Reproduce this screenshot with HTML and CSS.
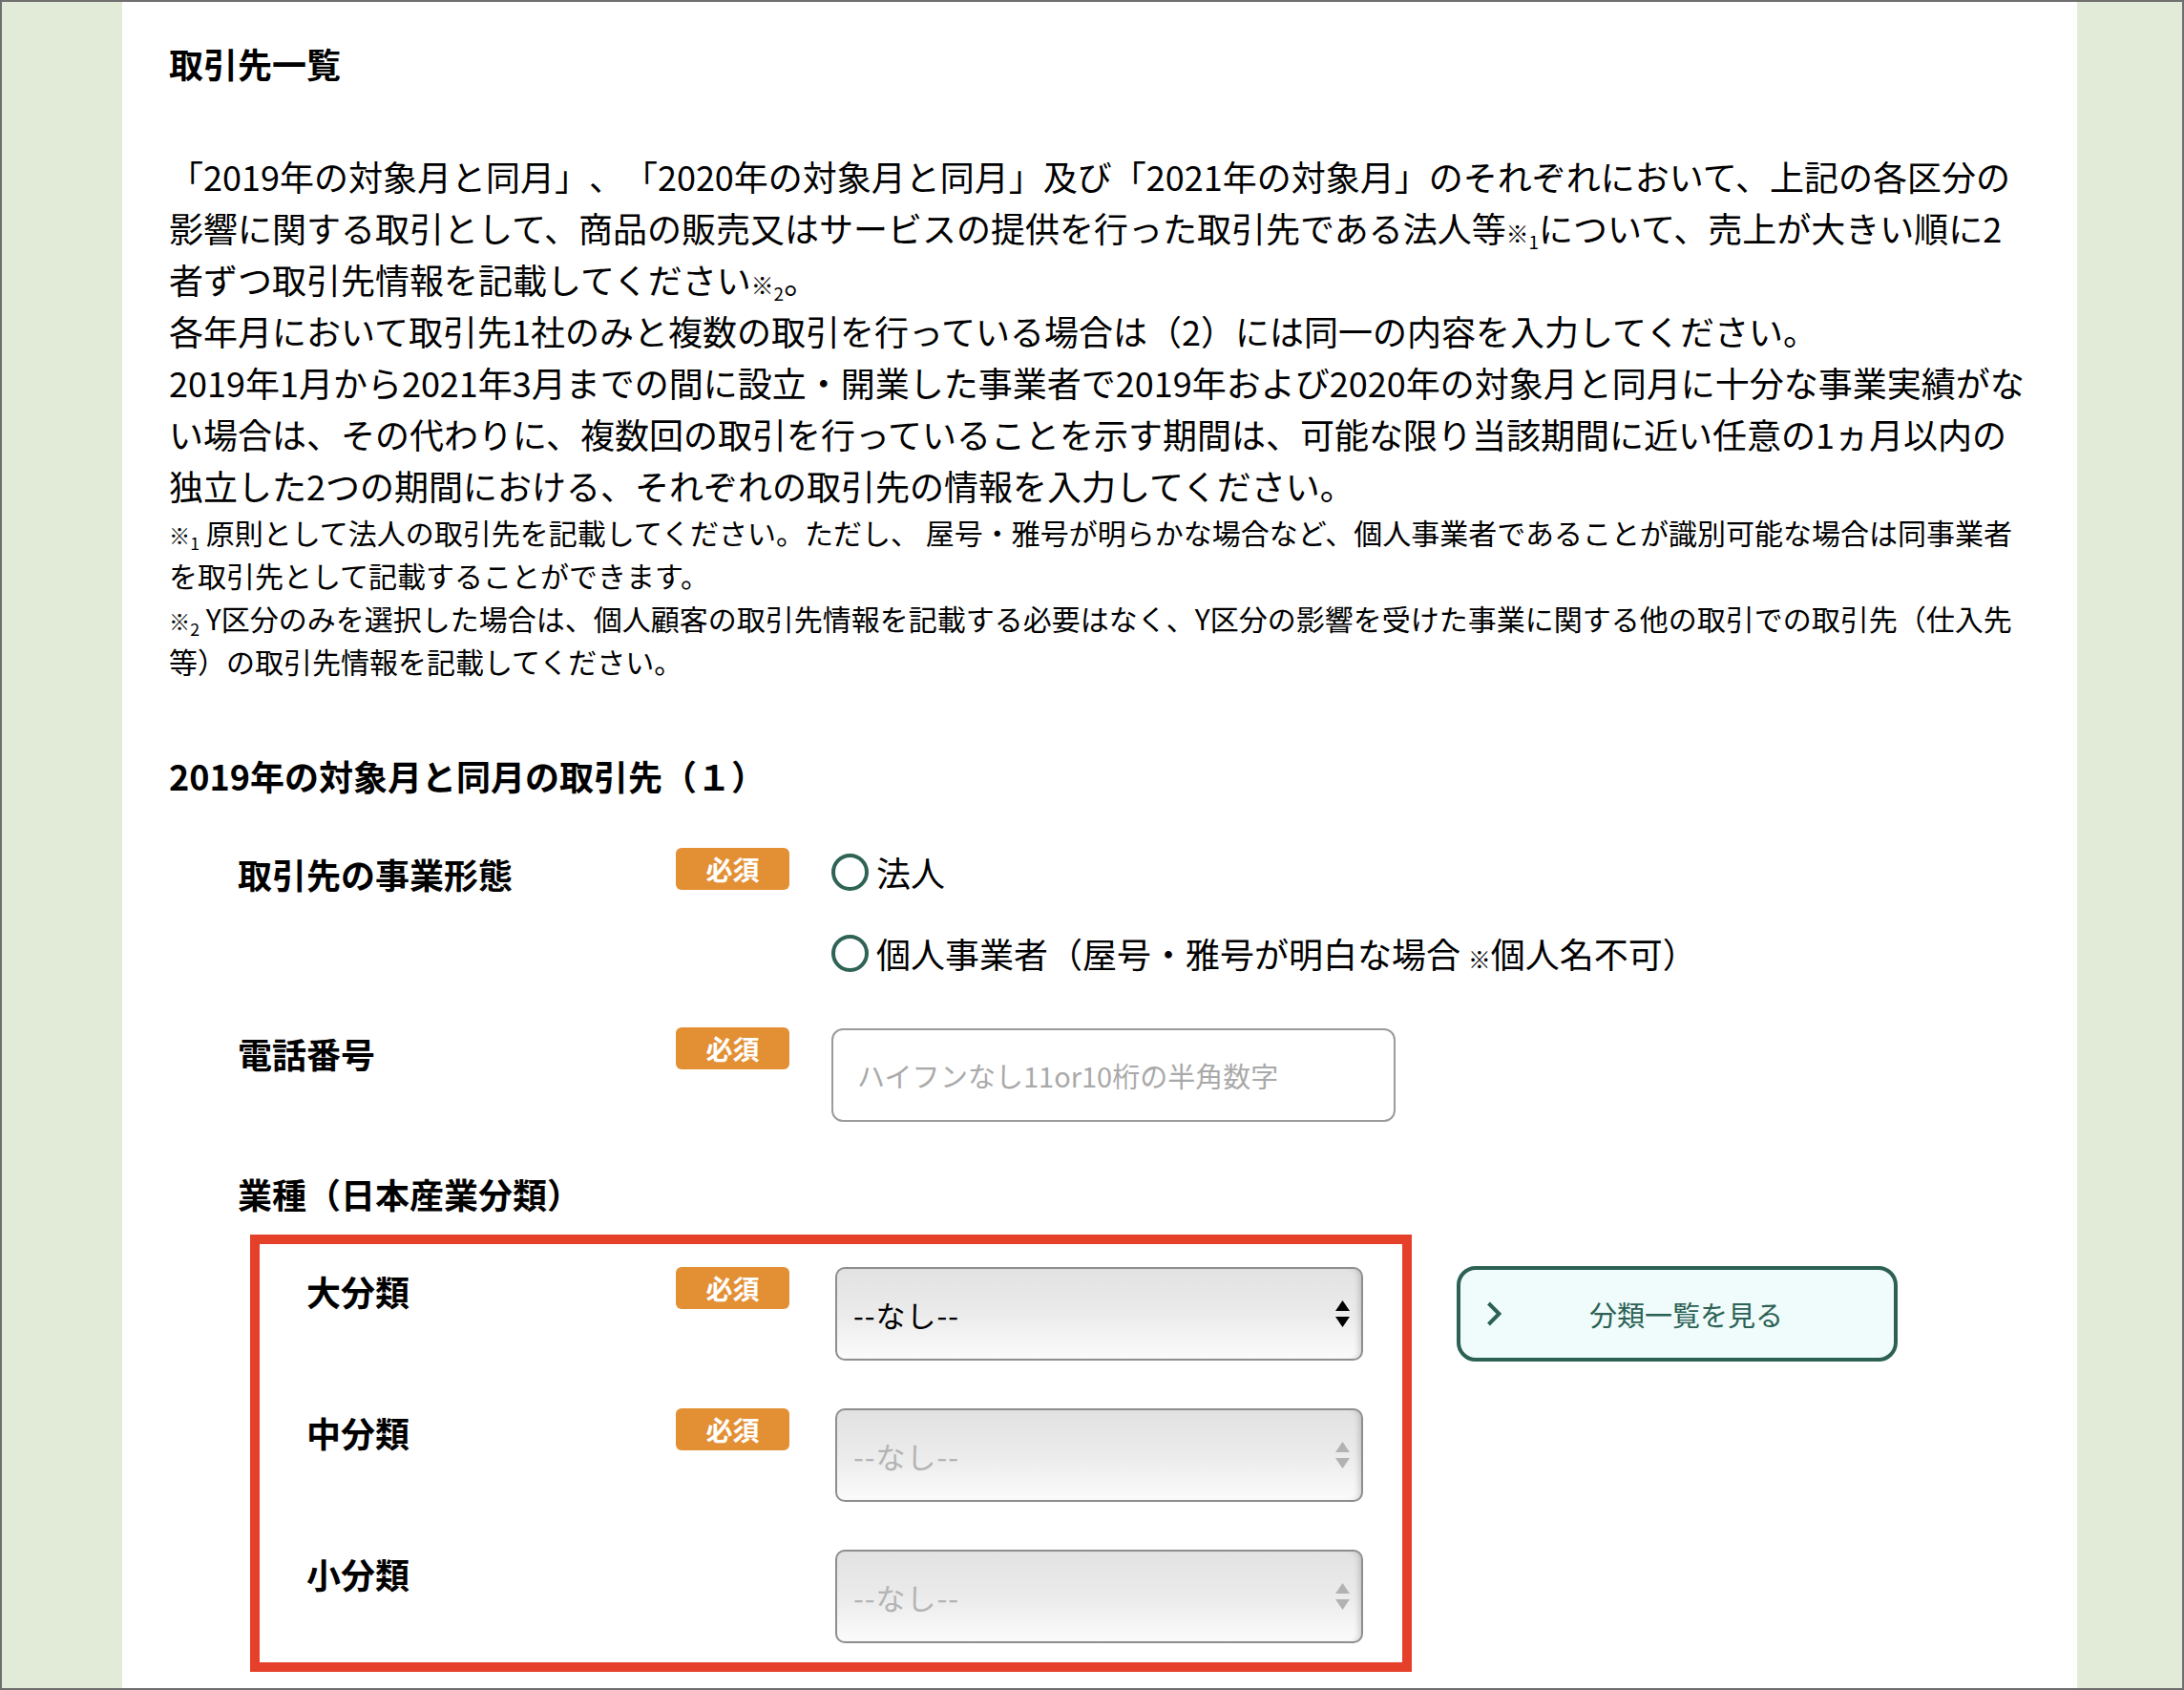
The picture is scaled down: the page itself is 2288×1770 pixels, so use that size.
FILE: index.html
```html
<!DOCTYPE html>
<html lang="ja">
<head>
<meta charset="utf-8">
<title>取引先一覧</title>
<link rel="stylesheet" href="styles.css">
</head>
<body>
<div class="frame">
  <main class="sheet">
    <h1 class="title">取引先一覧</h1>
    <p class="lead">「2019年の対象月と同月」、「2020年の対象月と同月」及び「2021年の対象月」のそれぞれにおいて、上記の各区分の<br>影響に関する取引として、商品の販売又はサービスの提供を行った取引先である法人等<span class="kome">※<sub>1</sub></span>について、売上が大きい順に2<br>者ずつ取引先情報を記載してください<span class="kome">※<sub>2</sub></span>。<br>各年月において取引先1社のみと複数の取引を行っている場合は（2）には同一の内容を入力してください。<br>2019年1月から2021年3月までの間に設立・開業した事業者で2019年および2020年の対象月と同月に十分な事業実績がな<br>い場合は、その代わりに、複数回の取引を行っていることを示す期間は、可能な限り当該期間に近い任意の1ヵ月以内の<br>独立した2つの期間における、それぞれの取引先の情報を入力してください。</p>
    <p class="note"><span class="kome">※<sub>1</sub></span> 原則として法人の取引先を記載してください。ただし、 屋号・雅号が明らかな場合など、個人事業者であることが識別可能な場合は同事業者<br>を取引先として記載することができます。</p>
    <p class="note"><span class="kome">※<sub>2</sub></span> Y区分のみを選択した場合は、個人顧客の取引先情報を記載する必要はなく、Y区分の影響を受けた事業に関する他の取引での取引先（仕入先<br>等）の取引先情報を記載してください。</p>

    <h2 class="section-title">2019年の対象月と同月の取引先（１）</h2>

    <div class="form">
      <div class="row">
        <div class="label">取引先の事業形態</div>
        <div class="badge">必須</div>
        <div class="control radios">
          <label class="radio"><input type="radio" name="form1"><span>法人</span></label>
          <label class="radio"><input type="radio" name="form1"><span>個人事業者（屋号・雅号が明白な場合 <span class="kome-in">※</span>個人名不可）</span></label>
        </div>
      </div>

      <div class="row">
        <div class="label">電話番号</div>
        <div class="badge">必須</div>
        <div class="control">
          <input class="tel" type="tel" placeholder="ハイフンなし11or10桁の半角数字">
        </div>
      </div>

      <div class="group">
        <div class="group-title">業種（日本産業分類）</div>
        <div class="group-body">
          <div class="redbox">
            <div class="sub-row">
              <div class="label sub-label">大分類</div>
              <div class="badge">必須</div>
              <div class="select-wrap">
                <select class="select"><option>--なし--</option></select>
                <svg class="arrows" viewBox="0 0 15 28" aria-hidden="true"><polygon points="0,11 7.5,0 15,11"/><polygon points="0,17 15,17 7.5,28"/></svg>
              </div>
            </div>
            <div class="sub-row">
              <div class="label sub-label">中分類</div>
              <div class="badge">必須</div>
              <div class="select-wrap is-disabled">
                <select class="select" disabled><option>--なし--</option></select>
                <svg class="arrows" viewBox="0 0 15 28" aria-hidden="true"><polygon points="0,11 7.5,0 15,11"/><polygon points="0,17 15,17 7.5,28"/></svg>
              </div>
            </div>
            <div class="sub-row">
              <div class="label sub-label">小分類</div>
              <div></div>
              <div class="select-wrap is-disabled">
                <select class="select" disabled><option>--なし--</option></select>
                <svg class="arrows" viewBox="0 0 15 28" aria-hidden="true"><polygon points="0,11 7.5,0 15,11"/><polygon points="0,17 15,17 7.5,28"/></svg>
              </div>
            </div>
          </div>
          <button class="list-btn" type="button">
            <svg class="chev" viewBox="0 0 16 26" aria-hidden="true"><path d="M2.5 2 L13.5 13 L2.5 24"/></svg>
            <span class="list-btn-text">分類一覧を見る</span>
          </button>
        </div>
      </div>
    </div>
  </main>
</div>
</body>
</html>
```

FILE: styles.css
```css
html, body {
  margin: 0;
  padding: 0;
  background: #ffffff;
}

.frame {
  width: 2288px;
  height: 1770px;
  box-sizing: border-box;
  border: 2px solid #6f6f6f;
  background: #e2ebd8;
  overflow: hidden;
  font-family: "Noto Sans CJK JP", "Noto Sans", sans-serif;
  color: #000;
  text-spacing-trim: space-all;
}

.sheet {
  margin-left: 126px;
  width: 2048px;
  height: 100%;
  box-sizing: border-box;
  background: #ffffff;
  padding: 37px 0 0 49px;
}

.title {
  margin: 0;
  font-size: 36px;
  line-height: 54px;
  font-weight: 700;
}

.lead {
  margin: 64px 0 0;
  font-size: 36px;
  line-height: 54px;
  white-space: nowrap;
}

.note {
  margin: 0;
  font-size: 30px;
  line-height: 45px;
  white-space: nowrap;
}

.kome {
  font-size: 0.66em;
  font-weight: 700;
  line-height: 0;
}

.kome sub {
  font-size: 0.8em;
  font-weight: 400;
  line-height: 0;
  vertical-align: -0.35em;
}

.note .kome {
  font-size: 0.74em;
}

.kome-in {
  font-size: 0.66em;
  font-weight: 700;
  line-height: 0;
}

.section-title {
  margin: 70px 0 0;
  font-size: 36px;
  line-height: 54px;
  font-weight: 700;
}

.form {
  margin: 49px 0 0 72px;
}

.row {
  display: grid;
  grid-template-columns: 459px 119px 1fr;
  align-items: start;
}

.row + .row {
  margin-top: 53px;
}

.label {
  font-size: 36px;
  line-height: 54px;
  font-weight: 700;
}

.badge {
  width: 119px;
  height: 44px;
  border-radius: 6px;
  background: #e38f34;
  color: #ffffff;
  font-size: 28px;
  font-weight: 700;
  display: flex;
  align-items: center;
  justify-content: center;
}

.control {
  margin-left: 44px;
}

.radios {
  display: flex;
  flex-direction: column;
  gap: 35px;
}

.radio {
  display: flex;
  align-items: center;
  gap: 8px;
  height: 50px;
  font-size: 36px;
  line-height: 50px;
}

.radio input {
  appearance: none;
  -webkit-appearance: none;
  width: 39px;
  height: 39px;
  margin: 0;
  box-sizing: border-box;
  border: 4px solid #2e6356;
  border-radius: 50%;
  background: #ffffff;
}

.tel {
  display: block;
  width: 591px;
  height: 98px;
  margin-top: 1px;
  box-sizing: border-box;
  border: 2px solid #9b9b9b;
  border-radius: 12px;
  padding: 0 0 0 25px;
  font-family: "Noto Sans CJK JP", "Noto Sans", sans-serif;
  font-size: 29px;
  color: #000;
  background: #ffffff;
  outline: none;
}

.tel::placeholder {
  color: #a9a9a9;
  font-family: "Noto Sans CJK JP", "Noto Sans", sans-serif;
}

.group-title {
  margin-top: 48px;
  font-size: 36px;
  line-height: 54px;
  font-weight: 700;
}

.group-body {
  display: flex;
  align-items: flex-start;
  margin: 16px 0 0 13px;
}

.redbox {
  width: 1217px;
  box-sizing: border-box;
  border: 10px solid #e4402a;
  padding: 24px 41px 20px 49px;
  display: flex;
  flex-direction: column;
  gap: 50px;
}

.sub-row {
  display: grid;
  grid-template-columns: 387px 119px 1fr;
  align-items: start;
}

.sub-label {
  line-height: 50px;
}

.select-wrap {
  position: relative;
  width: 553px;
  height: 98px;
  margin-left: 48px;
  color: #000;
}

.select-wrap.is-disabled {
  color: #b2b2b2;
}

.select {
  appearance: none;
  -webkit-appearance: none;
  display: block;
  width: 100%;
  height: 100%;
  box-sizing: border-box;
  border: 2px solid #8e8e8e;
  border-radius: 10px;
  background: linear-gradient(to bottom, #e2e2e2 0%, #ebebeb 50%, #fbfbfb 100%);
  box-shadow: inset -6px 0 6px -4px rgba(0, 0, 0, 0.18);
  padding: 0 0 0 17px;
  font-family: "Noto Sans CJK JP", "Noto Sans", sans-serif;
  font-size: 31px;
  letter-spacing: 1px;
  color: inherit;
  opacity: 1;
  outline: none;
}

.select:disabled {
  color: #b4b4b4;
  opacity: 1;
  background: linear-gradient(to bottom, #e2e2e2 0%, #ebebeb 50%, #fbfbfb 100%);
  border-color: #8e8e8e;
}

.arrows {
  position: absolute;
  right: 14px;
  top: 35px;
  width: 15px;
  height: 28px;
  fill: currentColor;
  pointer-events: none;
}

.list-btn {
  width: 462px;
  height: 100px;
  margin: 33px 0 0 47px;
  box-sizing: border-box;
  border: 4px solid #2c6154;
  border-radius: 20px;
  background: #effcfb;
  display: flex;
  align-items: center;
  padding: 0 0 0 27px;
  font-family: "Noto Sans CJK JP", "Noto Sans", sans-serif;
  font-size: 29px;
  color: #2c6154;
  cursor: pointer;
}

.chev {
  width: 16px;
  height: 26px;
  fill: none;
  stroke: #2c6154;
  stroke-width: 4;
  flex: none;
}

.list-btn-text {
  margin-left: 92px;
}
```
